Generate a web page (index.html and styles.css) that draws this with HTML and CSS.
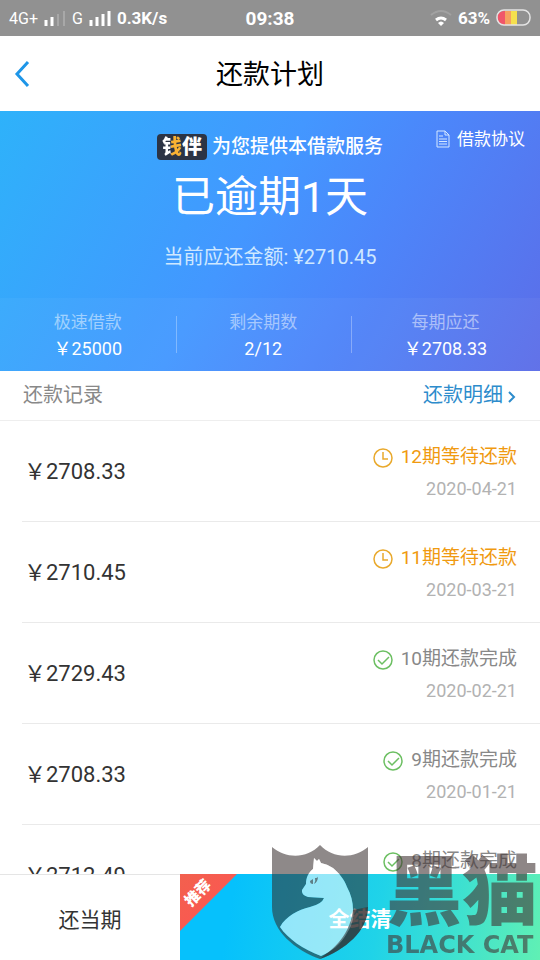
FILE: index.html
```html
<!DOCTYPE html>
<html lang="zh-CN">

<head>
    <meta charset="UTF-8">
    <meta name="viewport" content="width=device-width, initial-scale=1.0">
    <title>还款计划</title>
    <link rel="stylesheet" href="styles.css">
</head>

<body>
    <div class="status-bar">
        <div class="status-left">
            <span class="net">4G+</span>
            <svg class="signal" width="22" height="18" viewBox="0 0 22 18">
                <path d="M2 11v6M8 8v9" stroke="#fff" stroke-width="3" />
                <path d="M14 5v12M20 2v15" stroke="#a8a8a8" stroke-width="2" />
            </svg>
            <span class="net">G</span>
            <svg class="signal" width="22" height="18" viewBox="0 0 22 18">
                <path d="M2 11v6M8 8v9M14 5v12M20 2v15" stroke="#fff" stroke-width="3" />
            </svg>
            <span class="speed">0.3K/s</span>
        </div>
        <span class="time">09:38</span>
        <div class="status-right">
            <svg width="22" height="18" viewBox="0 0 22 18" fill="none">
                <path d="M1 6Q11-2 21 6" stroke="#a2a2a2" stroke-width="2" />
                <path d="M6 11Q11 7 16 11" stroke="#fff" stroke-width="3" />
                <path d="M8 14Q11 11 14 14L11 17z" fill="#fff" />
            </svg>
            <span class="percent">63%</span>
            <svg width="35" height="18" viewBox="0 0 35 18">
                <path d="M9 2H8a7 7 0 0 0 0 14h1z" fill="#f0566a" />
                <path d="M9 2h6v14H9z" fill="#f6a060" />
                <path d="M15 2h6v14h-6z" fill="#f5e04e" />
                <rect x="1" y="1" width="33" height="15" rx="7" fill="none" stroke="#e4e4e4" stroke-width="1.5" />
            </svg>
        </div>
    </div>

    <header class="nav">
        <a class="back" href="#" aria-label="返回">
            <svg width="16" height="28" viewBox="0 0 16 28" fill="none">
                <path d="M14 2L3 14l11 12" stroke="#1e96e8" stroke-width="3" />
            </svg>
        </a>
        <h1>还款计划</h1>
    </header>

    <section class="hero">
        <a class="agreement" href="#">
            <svg width="14" height="18" viewBox="0 0 14 18" fill="none" stroke="#d5e8ff">
                <path d="M1 1h8l4 4v12H1zM9 1v4h4M3 6h4M3 9h8M3 11.500h8M3 14h8" />
            </svg>
            借款协议
        </a>
        <div class="summary">
            <p class="provider"><span class="brand"><i>钱</i>伴</span>为您提供本借款服务</p>
            <p class="overdue">已逾期1天</p>
            <p class="due">当前应还金额: ¥2710.45</p>
        </div>
        <dl class="stats">
            <div><dt>极速借款</dt><dd>￥25000</dd></div>
            <div><dt>剩余期数</dt><dd>2/12</dd></div>
            <div><dt>每期应还</dt><dd>￥2708.33</dd></div>
        </dl>
    </section>

    <div class="record-head">
        <h2>还款记录</h2>
        <a href="#">还款明细
            <svg width="8" height="14" viewBox="0 0 8 14" fill="none">
                <path d="M1 2l5 5-5 5" stroke="#2d8ccc" stroke-width="2" />
            </svg>
        </a>
    </div>

    <svg class="sprite" width="0" height="0">
        <symbol id="clock" viewBox="0 0 20 20">
            <circle cx="10" cy="10" r="9" />
            <path d="M10 4v7h5" />
        </symbol>
        <symbol id="check" viewBox="0 0 20 20">
            <circle cx="10" cy="10" r="9" />
            <path d="M5 10l4 4 7-7" />
        </symbol>
    </svg>

    <ul class="records">
        <li>
            <span class="amount">￥2708.33</span>
            <div class="detail">
                <p class="state waiting"><svg><use href="#clock" /></svg>12期等待还款</p>
                <p class="date">2020-04-21</p>
            </div>
        </li>
        <li>
            <span class="amount">￥2710.45</span>
            <div class="detail">
                <p class="state waiting"><svg><use href="#clock" /></svg>11期等待还款</p>
                <p class="date">2020-03-21</p>
            </div>
        </li>
        <li>
            <span class="amount">￥2729.43</span>
            <div class="detail">
                <p class="state done"><svg><use href="#check" /></svg>10期还款完成</p>
                <p class="date">2020-02-21</p>
            </div>
        </li>
        <li>
            <span class="amount">￥2708.33</span>
            <div class="detail">
                <p class="state done"><svg><use href="#check" /></svg>9期还款完成</p>
                <p class="date">2020-01-21</p>
            </div>
        </li>
        <li>
            <span class="amount">￥2712.49</span>
            <div class="detail">
                <p class="state done"><svg><use href="#check" /></svg>8期还款完成</p>
            </div>
        </li>
    </ul>

    <footer class="actions">
        <button class="pay-current">还当期</button>
        <button class="pay-all"><span class="ribbon"><b>推荐</b></span>全结清</button>
    </footer>

    <div class="watermark">
        <svg width="98" height="114" viewBox="0 0 98 114">
            <path class="shield" fill-rule="evenodd" d="M1 2C15 14 36 14 49 0C62 14 83 14 97 2V62C97 86 74 105 49 114C24 105 1 86 1 62zM43 13L42 24C37 28 35 33 35 39L31 45Q30 50 37 52L53 53Q51 59 39 62C27 65 15 71 9 82C17 94 32 104 50 111C60 107 70 99 76 88C81 80 83 73 82 65C82 57 80 49 76 42C73 34 68 28 62 23Q56 19 50 18L48 14L46 16z" />
            <path class="cat" d="M43 13L42 24C37 28 35 33 35 39L31 45Q30 50 37 52L53 53Q51 59 39 62C27 65 15 71 9 82C17 94 32 104 50 111C60 107 70 99 76 88C81 80 83 73 82 65C82 57 80 49 76 42C73 34 68 28 62 23Q56 19 50 18L48 14L46 16z" />
            <path class="shield" d="M39 36l3-2v5q-3 0-3-3zM44 33q3 0 3-2q0 6-4 8q2-3 1-6zM97 62C97 86 74 105 49 114C58 106 78 95 82 65z" />
        </svg>
        <div class="watermark-text">
            <strong>黑猫</strong>
            <span>BLACK CAT</span>
        </div>
    </div>
</body>

</html>
```
FILE: styles.css
```css
* {
    margin: 0;
    padding: 0;
    box-sizing: border-box;
}

body {
    display: flex;
    flex-direction: column;
    height: 100vh;
    overflow: hidden;
    font-family: Roboto, "Noto Sans CJK SC", sans-serif;
    color: #333;
    background: #fff;
}

a {
    text-decoration: none;
}

ul {
    list-style: none;
}

/* status bar */
.status-bar {
    display: grid;
    grid-template-columns: 1fr auto 1fr;
    align-items: center;
    flex: none;
    height: 36px;
    padding: 0 9px;
    color: #fff;
    background: #919191;
    font-size: 17px;
}

.status-left,
.status-right {
    display: flex;
    align-items: center;
}

.status-left {
    gap: 6px;
}

.status-right {
    justify-content: flex-end;
    gap: 6px;
}

.net {
    font-size: 16px;
}

.speed,
.percent {
    font-weight: 700;
}

.time {
    font-size: 19px;
    font-weight: 700;
}

/* title */
.nav {
    position: relative;
    display: flex;
    align-items: center;
    justify-content: center;
    flex: none;
    height: 75px;
}

.back {
    position: absolute;
    left: 14px;
    display: flex;
}

.nav h1 {
    padding-top: 2px;
    font-size: 27px;
    font-weight: 400;
    line-height: 40px;
    color: #000;
}

/* blue card */
.hero {
    position: relative;
    flex: none;
    color: #fff;
    background: linear-gradient(120deg, #2eb2fa 0%, #4397ff 45%, #4c86fa 65%, #5c6de8 100%);
}

.agreement {
    position: absolute;
    top: 15px;
    right: 15px;
    display: flex;
    align-items: center;
    gap: 7px;
    font-size: 17px;
    line-height: 26px;
    color: #fff;
}

.summary {
    height: 187px;
    padding-top: 22px;
    text-align: center;
}

.provider {
    display: flex;
    align-items: center;
    justify-content: center;
    gap: 5px;
    font-size: 19px;
    font-weight: 500;
    line-height: 28px;
}

.brand {
    padding: 0 5px;
    border-radius: 4px;
    background: #2c3445;
    font-size: 20px;
    font-weight: 900;
    line-height: 26px;
}

.brand i {
    font-style: normal;
    background: linear-gradient(90deg, #fff 45%, #f9b233 45%);
    background-clip: text;
    -webkit-background-clip: text;
    color: transparent;
}

.overdue {
    font-size: 43px;
    line-height: 72px;
}

.due {
    padding-top: 9px;
    font-size: 20px;
    line-height: 30px;
    color: #cfe8ff;
}

.stats {
    display: grid;
    grid-template-columns: 13fr 13fr 14fr;
    height: 73px;
    padding: 11px 0;
    background: rgba(255, 255, 255, 0.04);
    text-align: center;
}

.stats div {
    position: relative;
}

.stats div + div::before {
    content: "";
    position: absolute;
    left: 0;
    top: 7px;
    width: 1px;
    height: 37px;
    background: rgba(255, 255, 255, 0.3);
}

.stats dt {
    font-size: 17px;
    line-height: 26px;
    color: rgba(255, 255, 255, 0.5);
}

.stats dd {
    font-size: 18px;
    line-height: 27px;
}

/* records */
.record-head {
    display: flex;
    align-items: center;
    justify-content: space-between;
    flex: none;
    height: 50px;
    padding: 0 24px 2px 23px;
    border-bottom: 1px solid #eee;
    line-height: 30px;
}

.record-head h2 {
    font-size: 20px;
    font-weight: 400;
    color: #888;
}

.record-head a {
    display: flex;
    align-items: center;
    gap: 5px;
    font-size: 20px;
    color: #2d8ccc;
}

.record-head a svg {
    margin-top: 5px;
}

.sprite {
    position: absolute;
}

.records {
    flex: 1;
    min-height: 0;
    overflow: hidden;
    padding-left: 22px;
}

.records li {
    display: flex;
    justify-content: space-between;
    height: 101px;
    padding: 18px 23px 0 2px;
    border-bottom: 1px solid #eaeaea;
}

.amount {
    font-size: 22px;
    line-height: 66px;
}

.detail {
    text-align: right;
}

.state {
    display: flex;
    align-items: center;
    justify-content: flex-end;
    gap: 8px;
    font-size: 19px;
    line-height: 36px;
}

.state svg {
    width: 20px;
    height: 20px;
    margin-top: 2px;
    fill: none;
    stroke-width: 1.5;
}

.waiting {
    color: #f09a10;
}

.waiting svg {
    stroke: #e9a92c;
}

.done {
    color: #888;
}

.done svg {
    stroke: #6cbf62;
}

.date {
    font-size: 18px;
    line-height: 28px;
    color: #b2b2b2;
}

/* bottom buttons */
.actions {
    display: grid;
    grid-template-columns: 1fr 2fr;
    flex: none;
    height: 86px;
}

.actions button {
    border: none;
    font-family: inherit;
    font-size: 21px;
}

.actions .pay-current {
    border-top: 1px solid #e5e5e5;
    color: #333;
    background: #fff;
}

.pay-all {
    position: relative;
    overflow: hidden;
    color: #fff;
    background: linear-gradient(100deg, #06c1fc 15%, #20d3e8 55%, #60f0b4 100%);
    font-weight: 700;
}

.ribbon {
    position: absolute;
    left: 0;
    top: 0;
    width: 57px;
    height: 57px;
    background: linear-gradient(135deg, #f2604e, #ff5453);
    clip-path: polygon(0 0, 100% 0, 0 100%);
    font-size: 15px;
    line-height: 20px;
}

.ribbon b {
    position: absolute;
    left: 2px;
    top: 9px;
    width: 32px;
    transform: rotate(-45deg);
}

/* watermark */
.watermark {
    position: fixed;
    right: 2px;
    bottom: 1px;
    display: flex;
    align-items: flex-end;
    gap: 17px;
    color: rgba(66, 54, 54, 0.6);
    pointer-events: none;
}

.shield {
    fill: rgba(50, 40, 40, 0.55);
}

.cat {
    fill: rgba(255, 255, 255, 0.55);
}

.watermark-text {
    display: flex;
    flex-direction: column;
    white-space: nowrap;
}

.watermark-text strong {
    font-size: 76px;
    font-weight: 900;
    line-height: 76px;
}

.watermark-text span {
    font-family: "DejaVu Sans", sans-serif;
    font-size: 24px;
    font-weight: 700;
    line-height: 28px;
}
```
